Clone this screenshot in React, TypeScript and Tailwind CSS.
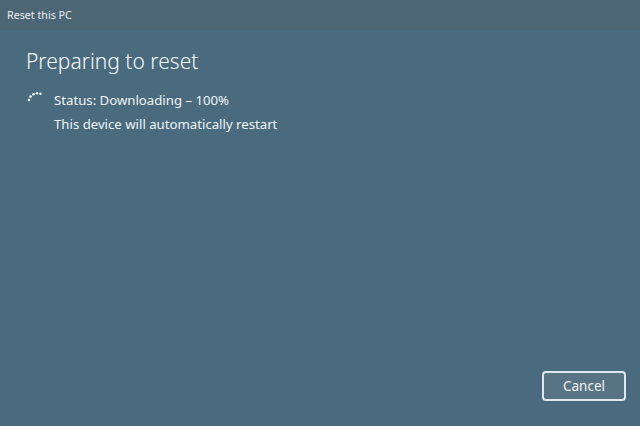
import React from "react";

function Spinner() {
  const dots = [
    { cx: 3, cy: 11, r: 1.3 },
    { cx: 4.6, cy: 7.6, r: 1.3 },
    { cx: 7.4, cy: 5.2, r: 1.3 },
    { cx: 11, cy: 4.2, r: 1.3 },
    { cx: 14.4, cy: 4.8, r: 1.2 },
  ];
  return (
    <svg width="18" height="16" viewBox="0 0 18 16" className="shrink-0">
      {dots.map((d, i) => (
        <circle key={i} cx={d.cx} cy={d.cy} r={d.r} fill="#f2f6f8" />
      ))}
    </svg>
  );
}

export default function App() {
  return (
    <div
      className="w-[640px] h-[426px] flex flex-col bg-[#4a6b7e] text-white overflow-hidden"
      style={{ fontFamily: '"Noto Sans", "Open Sans", sans-serif' }}
    >
      <div className="h-[30px] shrink-0 bg-[#4d6676] flex items-center pl-[7px] text-[10.7px] text-[#e6edf1]">
        Reset this PC
      </div>
      <div className="flex-1 flex flex-col px-[26px]">
        <h1 className="mt-[16px] text-[21px] leading-[30px] font-light text-[#f4f7f9]">
          Preparing to reset
        </h1>
        <div className="mt-[12px] flex">
          <div className="w-[28px] pt-[1px]">
            <Spinner />
          </div>
          <div className="flex flex-col text-[13.2px] leading-[24px] text-[#eef3f6]">
            <span>Status: Downloading – 100%</span>
            <span>This device will automatically restart</span>
          </div>
        </div>
        <div className="flex-1" />
        <div className="flex justify-end pb-[25px] -mr-[12px]">
          <button className="w-[84px] h-[30px] rounded-[4px] border-2 border-[#dce9f0] bg-[#587383] text-[13.5px] text-[#eef3f6] flex items-center justify-center">
            Cancel
          </button>
        </div>
      </div>
    </div>
  );
}
